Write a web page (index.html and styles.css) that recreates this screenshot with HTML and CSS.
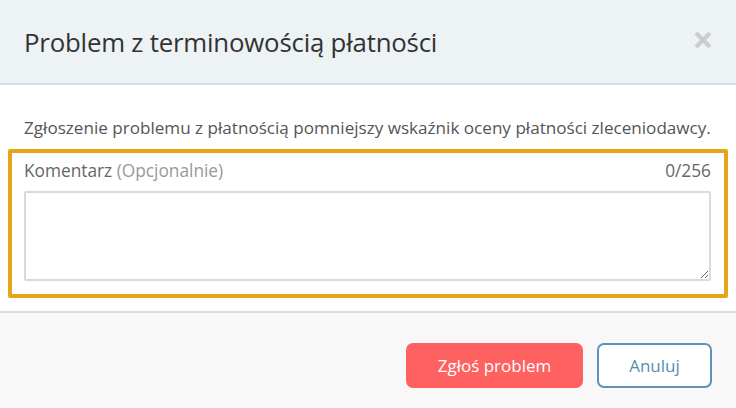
FILE: index.html
```html
<!DOCTYPE html>
<html lang="pl">
<head>
<meta charset="utf-8">
<link rel="stylesheet" href="styles.css">
</head>
<body>
<div class="modal">
  <header class="modal-header">
    <h1 class="modal-title">Problem z terminowością płatności</h1>
    <button class="close" aria-label="Zamknij">
      <svg width="20" height="20" viewBox="0 0 20 20"><path d="M3 3L17 17M17 3L3 17" stroke="#cccccc" stroke-width="4.2"/></svg>
    </button>
  </header>
  <section class="modal-body">
    <p class="desc">Zgłoszenie problemu z płatnością pomniejszy wskaźnik oceny płatności zleceniodawcy.</p>
    <div class="field">
      <div class="field-head">
        <label class="label">Komentarz <span class="opt">(Opcjonalnie)</span></label>
        <span class="count">0/256</span>
      </div>
      <textarea class="input"></textarea>
    </div>
  </section>
  <footer class="modal-footer">
    <button class="btn btn-danger">Zgłoś problem</button>
    <button class="btn btn-outline">Anuluj</button>
  </footer>
</div>
</body>
</html>
```
FILE: styles.css
```css
* { box-sizing: border-box; }
html, body { margin: 0; padding: 0; background: #fff; }
body { font-family: "Open Sans", "Noto Sans", sans-serif; width: 736px; height: 408px; overflow: hidden; }
.modal { display: flex; flex-direction: column; height: 408px; }
.modal-header {
  height: 85px;
  background: #edf2f5;
  border-bottom: 2px solid #d3e0e7;
  display: flex;
  align-items: center;
  justify-content: space-between;
  padding: 0 24px 0 24px;
}
.modal-title { margin: 0; font-weight: 400; font-size: 25.8px; color: #333; letter-spacing: -0.2px; }
.close { background: none; border: 0; padding: 0; margin-top: -4px; margin-right: -1px; display: flex; }
.modal-body { padding: 32px 8px 0 8px; height: 226px; }
.desc { margin: 0 16px 10px 16px; font-size: 17.1px; color: #555; line-height: 22px; white-space: nowrap; }
.field { border: 4px solid #e5a518; border-radius: 2px; padding: 7px 13px 13px 12px; }
.field-head { display: flex; justify-content: space-between; font-size: 17.3px; line-height: 22px; color: #666; margin-bottom: 9px; }
.opt { color: #999; }
.count { color: #666; }
.input { display: block; width: 100%; height: 90px; border: 2px solid #dadada; border-radius: 2px; resize: vertical; font-family: inherit; }
.modal-footer {
  flex: 1;
  background: #f8f8f8;
  border-top: 2px solid #dddddd;
  display: flex;
  justify-content: flex-end;
  align-items: flex-start;
  gap: 14px;
  padding: 30px 24px 0 0;
}
.btn { height: 45px; border-radius: 7px; font-family: inherit; font-size: 17px; padding: 0; }
.btn-danger { width: 177px; background: #ff6160; color: #fff; border: 0; }
.btn-outline { width: 115px; background: #fff; color: #5a8db0; border: 2px solid #5f93b5; }
```
